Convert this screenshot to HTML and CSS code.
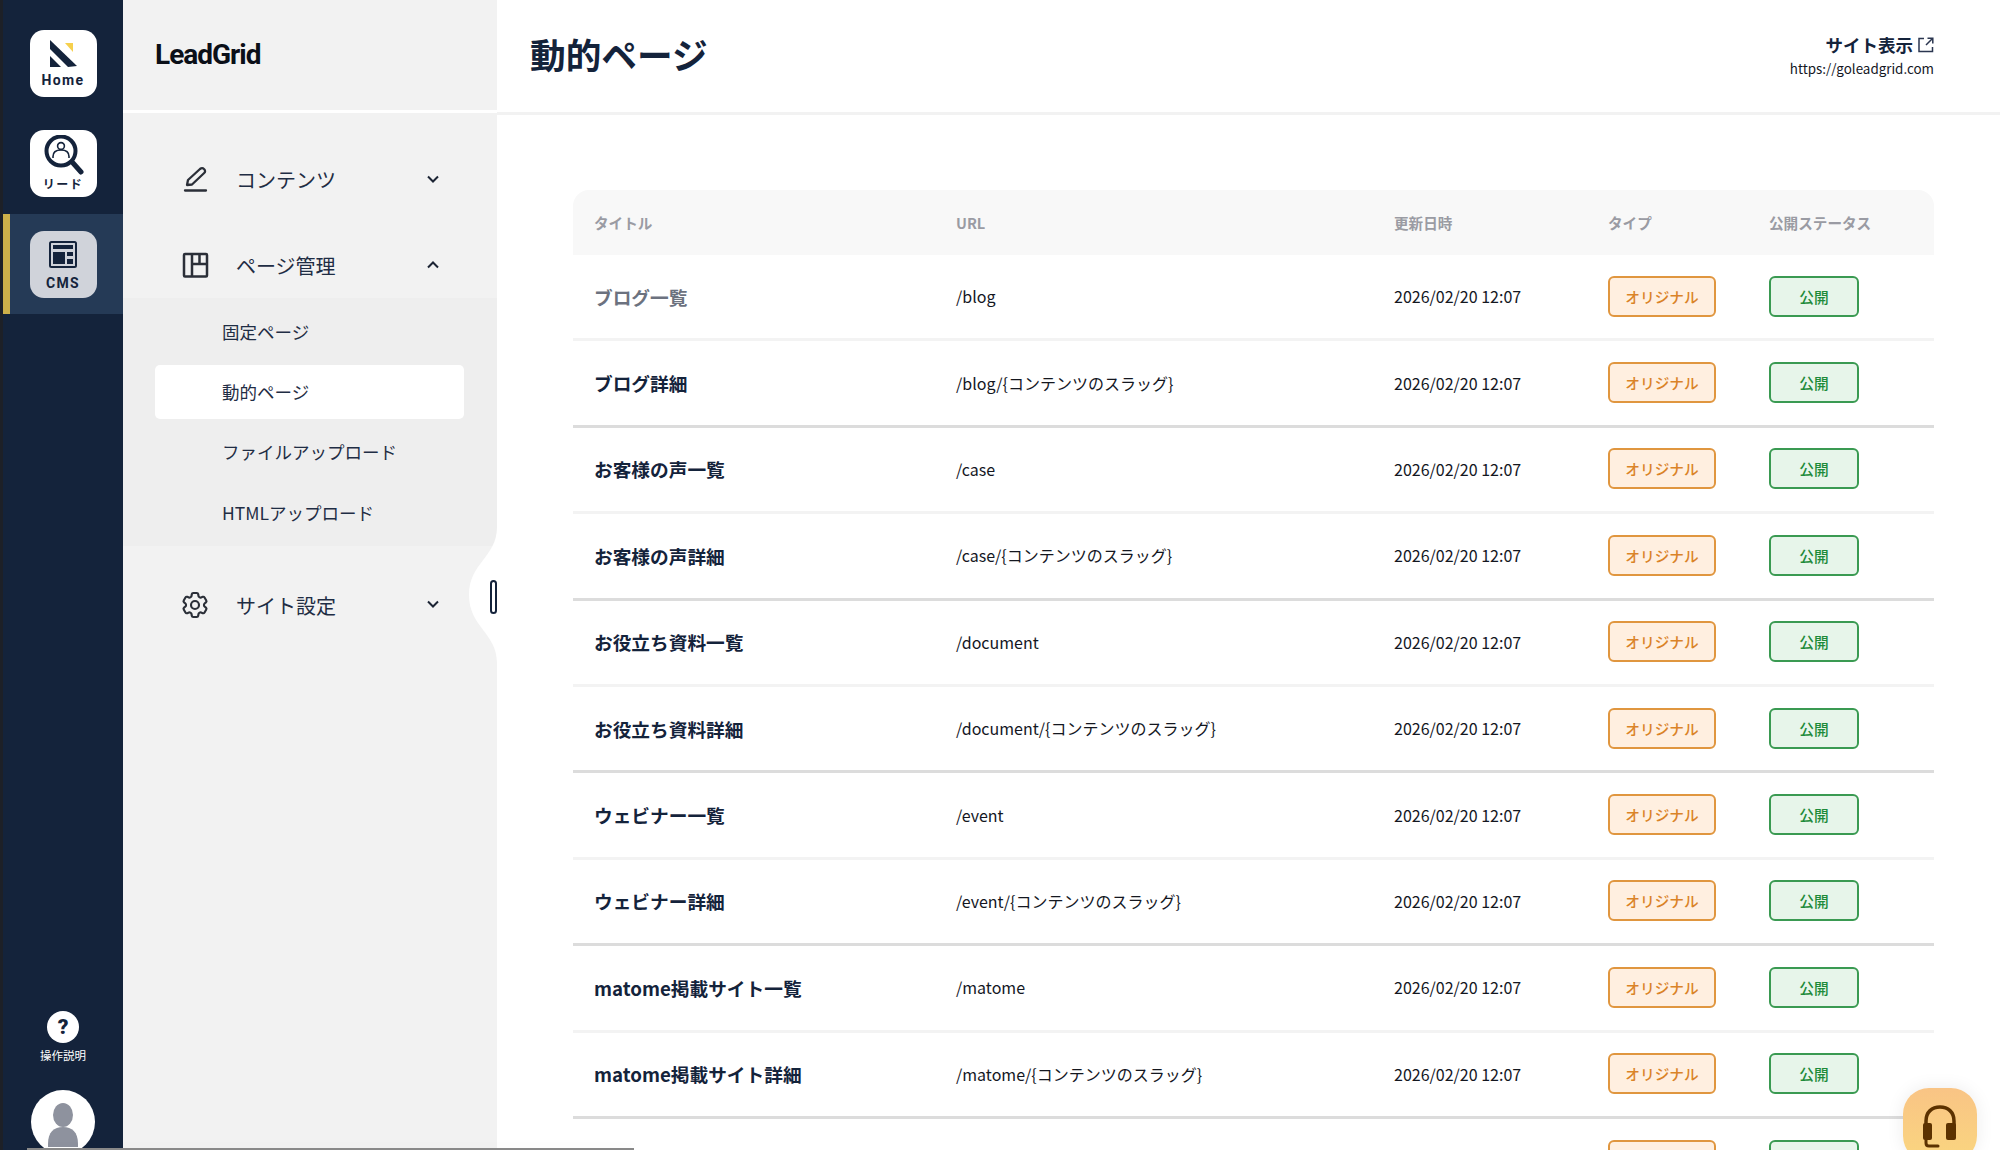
FILE: index.html
```html
<!DOCTYPE html>
<html lang="ja">
<head>
    <meta charset="UTF-8">
    <title>動的ページ</title>
    <link rel="stylesheet" href="styles.css">
</head>
<body>

<aside class="rail">
    <a class="rail-item">
        <span class="rail-tile">
            <svg class="rail-icon" width="30" height="30" viewBox="0 0 30 30">
                <path d="M2 2 L29 28 L20 29 L2 11 Z" fill="#14233b"/>
                <path d="M2 18 L13 29 L2 29 Z" fill="#14233b"/>
                <path d="M17 5 L25 5 L25 14 Z" fill="#f6d04d"/>
            </svg>
            <span class="rail-label">Home</span>
        </span>
    </a>
    <a class="rail-item rail-item-lead">
        <span class="rail-tile">
            <svg class="rail-icon" width="42" height="40" viewBox="0 0 42 40">
                <circle cx="18" cy="16" r="14.500" fill="none" stroke="#14233b" stroke-width="4"/>
                <circle cx="18" cy="11" r="3.400" fill="none" stroke="#14233b" stroke-width="1.600"/>
                <path d="M10 23 v-1.500 c0-4 3-6.500 8-6.500 s8 2.500 8 6.500 v1.500" fill="none" stroke="#14233b" stroke-width="1.600"/>
                <path d="M30 28 L38 37" stroke="#14233b" stroke-width="5" stroke-linecap="round"/>
            </svg>
            <span class="rail-label rail-label-jp">リード</span>
        </span>
    </a>
    <a class="rail-item rail-item-active">
        <span class="rail-tile">
            <svg class="rail-icon" width="30" height="30" viewBox="0 0 30 30">
                <rect x="2" y="3" width="26" height="25" rx="1.500" fill="none" stroke="#14233b" stroke-width="2"/>
                <rect x="5" y="6" width="20" height="4" fill="#14233b"/>
                <rect x="5" y="13" width="12" height="12" fill="#14233b"/>
                <rect x="19" y="13" width="6" height="4" fill="#14233b"/>
                <rect x="19" y="20" width="6" height="5" fill="#14233b"/>
            </svg>
            <span class="rail-label">CMS</span>
        </span>
    </a>
    <a class="rail-help">
        <span class="help-circle">?</span>
        <span class="help-label">操作説明</span>
    </a>
    <span class="rail-avatar">
        <svg width="64" height="64" viewBox="0 0 64 64">
            <ellipse cx="32" cy="25" rx="10" ry="12" fill="#8e929e"/>
            <path d="M17 54 c0-12 6-17 15-17 s15 5 15 17 v3 h-30 Z" fill="#8e929e"/>
        </svg>
    </span>
</aside>

<nav class="panel">
    <div class="panel-logo"><span class="logo-text">LeadGrid</span></div>
    <div class="panel-menu">
        <div class="menu-row">
            <svg class="menu-icon" width="28" height="28" viewBox="0 0 28 28" fill="none" stroke="#2b2f38" stroke-width="2.300">
                <path d="M6 20 L7 15 L19 4 C20.500 2.800 22 3 23.200 4.200 C24.400 5.400 24.300 7 23.200 8 L11 19.500 Z" stroke-linejoin="round"/>
                <path d="M4 25.500 H25" stroke-linecap="round"/>
            </svg>
            <span>コンテンツ</span>
            <svg class="chevron chevron-first" width="16" height="16" viewBox="0 0 16 16"><path d="M3 5.500 L8 10.500 L13 5.500" fill="none" stroke="#1c2434" stroke-width="2"/></svg>
        </div>
        <div class="menu-row menu-row-open">
            <svg class="menu-icon" width="28" height="28" viewBox="0 0 28 28" fill="none" stroke="#2b2f38" stroke-width="2.500">
                <rect x="3" y="3" width="23" height="22.500" rx="1"/>
                <path d="M11 3 V25.500 M11 13 H26 M18.500 3 V13"/>
            </svg>
            <span>ページ管理</span>
            <svg class="chevron chevron-up" width="16" height="16" viewBox="0 0 16 16"><path d="M3 10.500 L8 5.500 L13 10.500" fill="none" stroke="#1c2434" stroke-width="2"/></svg>
        </div>
        <div class="submenu">
            <a class="submenu-item">固定ページ</a>
            <a class="submenu-item submenu-item-active">動的ページ</a>
            <a class="submenu-item">ファイルアップロード</a>
            <a class="submenu-item">HTMLアップロード</a>
        </div>
        <div class="menu-row menu-row-last">
            <svg class="menu-icon menu-icon-gear" width="32" height="32" viewBox="0 0 24 24" fill="none" stroke="#2b2f38" stroke-width="1.600">
                <path d="M9.594 3.940c.09-.542.56-.94 1.110-.94h2.593c.55 0 1.020.398 1.110.94l.213 1.281c.063.374.313.686.645.87.074.04.147.083.22.127.324.196.72.257 1.075.124l1.217-.456a1.125 1.125 0 011.370.49l1.296 2.247a1.125 1.125 0 01-.26 1.431l-1.003.827c-.293.24-.438.613-.431.992a6.759 6.759 0 010 .255c-.007.378.138.75.43.99l1.005.828c.424.35.534.954.26 1.430l-1.298 2.247a1.125 1.125 0 01-1.369.491l-1.217-.456c-.355-.133-.75-.072-1.076.124a6.570 6.570 0 01-.22.128c-.331.183-.581.495-.644.869l-.213 1.280c-.09.543-.56.941-1.110.941h-2.594c-.55 0-1.020-.398-1.110-.94l-.213-1.281c-.062-.374-.312-.686-.644-.87a6.520 6.520 0 01-.22-.127c-.325-.196-.72-.257-1.076-.124l-1.217.456a1.125 1.125 0 01-1.369-.49l-1.297-2.247a1.125 1.125 0 01.26-1.431l1.004-.827c.292-.24.437-.613.43-.992a6.932 6.932 0 010-.255c.007-.378-.138-.75-.43-.99l-1.004-.828a1.125 1.125 0 01-.26-1.430l1.297-2.247a1.125 1.125 0 011.370-.491l1.216.456c.356.133.751.072 1.076-.124.072-.044.146-.087.22-.128.332-.183.582-.495.644-.869l.214-1.281z"/>
                <circle cx="12" cy="12" r="3"/>
            </svg>
            <span>サイト設定</span>
            <svg class="chevron" width="16" height="16" viewBox="0 0 16 16"><path d="M3 5.500 L8 10.500 L13 5.500" fill="none" stroke="#1c2434" stroke-width="2"/></svg>
        </div>
    </div>
    <svg class="panel-notch" width="28" height="136" viewBox="0 0 28 136"><path d="M28 0 C28 30 0 36 0 68 C0 100 28 106 28 136 Z" fill="#fff"/></svg>
    <span class="panel-toggle"></span>
</nav>

<main class="main">
    <header class="main-header">
        <h1 class="page-title">動的ページ</h1>
        <div class="site-link">
            <div class="site-link-name">サイト表示
                <svg width="16" height="16" viewBox="0 0 16 16" fill="none" stroke="#2b3650" stroke-width="1.500">
                    <path d="M6 1.500 H1 V14.500 H14.500 V10"/>
                    <path d="M8 8 L14.500 1.500 M9.500 1.200 H14.800 V6.500"/>
                </svg>
            </div>
            <div class="site-link-url">https://goleadgrid.com</div>
        </div>
    </header>

    <section class="table">
        <div class="table-row table-head">
            <div>タイトル</div><div>URL</div><div>更新日時</div><div>タイプ</div><div>公開ステータス</div>
        </div>
        <div class="table-row row-hover">
            <div class="cell-title">ブログ一覧</div><div>/blog</div><div>2026/02/20 12:07</div>
            <div><span class="badge badge-type">オリジナル</span></div><div><span class="badge badge-status">公開</span></div>
        </div>
        <div class="table-row row-end">
            <div class="cell-title">ブログ詳細</div><div>/blog/{コンテンツのスラッグ}</div><div>2026/02/20 12:07</div>
            <div><span class="badge badge-type">オリジナル</span></div><div><span class="badge badge-status">公開</span></div>
        </div>
        <div class="table-row">
            <div class="cell-title">お客様の声一覧</div><div>/case</div><div>2026/02/20 12:07</div>
            <div><span class="badge badge-type">オリジナル</span></div><div><span class="badge badge-status">公開</span></div>
        </div>
        <div class="table-row row-end">
            <div class="cell-title">お客様の声詳細</div><div>/case/{コンテンツのスラッグ}</div><div>2026/02/20 12:07</div>
            <div><span class="badge badge-type">オリジナル</span></div><div><span class="badge badge-status">公開</span></div>
        </div>
        <div class="table-row">
            <div class="cell-title">お役立ち資料一覧</div><div>/document</div><div>2026/02/20 12:07</div>
            <div><span class="badge badge-type">オリジナル</span></div><div><span class="badge badge-status">公開</span></div>
        </div>
        <div class="table-row row-end">
            <div class="cell-title">お役立ち資料詳細</div><div>/document/{コンテンツのスラッグ}</div><div>2026/02/20 12:07</div>
            <div><span class="badge badge-type">オリジナル</span></div><div><span class="badge badge-status">公開</span></div>
        </div>
        <div class="table-row">
            <div class="cell-title">ウェビナー一覧</div><div>/event</div><div>2026/02/20 12:07</div>
            <div><span class="badge badge-type">オリジナル</span></div><div><span class="badge badge-status">公開</span></div>
        </div>
        <div class="table-row row-end">
            <div class="cell-title">ウェビナー詳細</div><div>/event/{コンテンツのスラッグ}</div><div>2026/02/20 12:07</div>
            <div><span class="badge badge-type">オリジナル</span></div><div><span class="badge badge-status">公開</span></div>
        </div>
        <div class="table-row">
            <div class="cell-title">matome掲載サイト一覧</div><div>/matome</div><div>2026/02/20 12:07</div>
            <div><span class="badge badge-type">オリジナル</span></div><div><span class="badge badge-status">公開</span></div>
        </div>
        <div class="table-row row-end">
            <div class="cell-title">matome掲載サイト詳細</div><div>/matome/{コンテンツのスラッグ}</div><div>2026/02/20 12:07</div>
            <div><span class="badge badge-type">オリジナル</span></div><div><span class="badge badge-status">公開</span></div>
        </div>
        <div class="table-row">
            <div></div><div></div><div></div>
            <div><span class="badge badge-type"></span></div><div><span class="badge badge-status"></span></div>
        </div>
    </section>
</main>

<button class="support-btn">
    <svg width="36" height="44" viewBox="0 0 36 44" fill="none">
        <path d="M4 24 V17 C4 8 10 3 18 3 C26 3 32 8 32 17 V24" stroke="#5c3200" stroke-width="3.500"/>
        <rect x="1" y="19" width="9" height="17" rx="2" fill="#5c3200"/>
        <rect x="24" y="19" width="10" height="17" rx="2" fill="#5c3200"/>
        <path d="M4 36 V39 C4 41 5 42 7 42 H16" stroke="#5c3200" stroke-width="3" stroke-linecap="round"/>
    </svg>
</button>
<div class="bottom-line"></div>

</body>
</html>
```

FILE: styles.css
```css
* {
    box-sizing: border-box;
}
html, body {
    height: 100%;
}
body {
    margin: 0;
    display: flex;
    height: 1150px;
    overflow: hidden;
    font-family: "Noto Sans CJK JP", "Noto Sans", sans-serif;
    color: #14233b;
    background: #fff;
}

/* left dark rail */
.rail {
    width: 123px;
    flex-shrink: 0;
    display: flex;
    flex-direction: column;
    align-items: stretch;
    background: #14233b;
    border-left: 3px solid #1d2027;
    padding-top: 14px;
}
.rail-item {
    display: flex;
    justify-content: center;
    height: 100px;
    padding-top: 16px;
}
.rail-item-active {
    background: #253a56;
    border-left: 7px solid #cdb04a;
    padding-top: 17px;
}
.rail-tile {
    width: 67px;
    height: 67px;
    flex-shrink: 0;
    border-radius: 14px;
    background: #fff;
    display: flex;
    flex-direction: column;
    align-items: center;
}
.rail-item-active .rail-tile {
    background: #d0d3da;
    margin-right: 7px;
}
.rail-icon {
    flex-shrink: 0;
    margin-top: 8px;
}
.rail-item-lead .rail-icon {
    margin-top: 5px;
    margin-left: 2px;
}
.rail-label {
    font-family: Roboto, sans-serif;
    font-size: 14px;
    line-height: 16px;
    font-weight: 700;
    letter-spacing: 1.400px;
    margin-top: 4px;
}
.rail-item-active .rail-label {
    margin-top: 6px;
}
.rail-label-jp {
    font-family: "Noto Sans CJK JP", sans-serif;
    font-size: 12px;
    letter-spacing: 1.500px;
    margin-top: 1px;
}
.rail-help {
    margin-top: auto;
    display: flex;
    flex-direction: column;
    align-items: center;
    color: #fff;
}
.help-circle {
    width: 32px;
    height: 32px;
    border-radius: 50%;
    background: #fff;
    color: #14233b;
    font-family: Roboto, sans-serif;
    font-weight: 900;
    font-size: 21px;
    line-height: 32px;
    text-align: center;
}
.help-label {
    font-size: 11.500px;
    line-height: 16px;
    margin-top: 4px;
}
.rail-avatar {
    align-self: center;
    width: 64px;
    height: 64px;
    border-radius: 50%;
    background: #fff;
    margin: 27px 0 -4px 0;
    overflow: hidden;
}

/* second column */
.panel {
    position: relative;
    width: 374px;
    flex-shrink: 0;
    background: #f2f2f2;
}
.panel-logo {
    height: 113px;
    border-bottom: 3px solid #fff;
    padding: 36px 0 0 32px;
}
.logo-text {
    display: inline-block;
    font-family: Roboto, sans-serif;
    font-size: 28px;
    line-height: 38px;
    font-weight: 700;
    color: #0b0f18;
    letter-spacing: -1px;
}
.panel-menu {
    padding-top: 34px;
}
.menu-row {
    display: flex;
    align-items: center;
    height: 66px;
    padding: 0 56px 2px 58px;
    margin-bottom: 19px;
    font-size: 20px;
    color: #1f2d44;
}
.menu-row-open {
    margin-bottom: 0;
    padding-bottom: 0;
}
.menu-row-last {
    margin-top: 26px;
    padding-bottom: 0;
}
.menu-icon {
    flex-shrink: 0;
    margin-right: 27px;
}
.menu-icon-gear {
    margin: 0 25px 0 -2px;
}
.chevron {
    margin-left: auto;
    margin-top: -2px;
}
.chevron-first {
    margin-top: -1px;
}
.chevron-up {
    margin-top: 0;
}
.submenu {
    background: #eeeeee;
    padding: 7px 33px 6px 32px;
    display: flex;
    flex-direction: column;
    gap: 6.400px;
}
.submenu-item {
    display: flex;
    align-items: center;
    height: 54px;
    padding: 0 0 2px 67px;
    font-size: 17.500px;
    color: #1f2d44;
    border-radius: 5px;
}
.submenu-item-active {
    background: #fff;
}
.panel-notch {
    position: absolute;
    top: 527px;
    right: 0;
}
.panel-toggle {
    position: absolute;
    top: 580px;
    right: 0;
    width: 7px;
    height: 34px;
    border: 2px solid #14233b;
    border-radius: 4px;
    background: #fff;
}

/* main area */
.main {
    flex: 1;
    min-width: 0;
}
.main-header {
    display: flex;
    justify-content: space-between;
    align-items: center;
    height: 115px;
    border-bottom: 3px solid #f2f2f2;
    padding: 0 66px 0 33px;
}
.page-title {
    margin: -5px 0 0;
    font-size: 35.700px;
    font-weight: 700;
    color: #14233b;
}
.site-link {
    text-align: right;
    margin-top: -3px;
}
.site-link-name {
    display: flex;
    align-items: center;
    justify-content: flex-end;
    gap: 5px;
    font-size: 17.500px;
    line-height: 26px;
    font-weight: 700;
}
.site-link-url {
    font-size: 13.400px;
    line-height: 20px;
    color: #14171f;
}
.table {
    margin: 75px 66px 0 76px;
}
.table-row {
    display: grid;
    grid-template-columns: 362px 438px 214px 161px 1fr;
    align-items: center;
    height: 86.400px;
    border-bottom: 3px solid #f3f3f3;
    padding-bottom: 1px;
    font-size: 16px;
    color: #14171f;
}
.table-row > div {
    padding-left: 21px;
}
.row-end {
    border-bottom-color: #dcdcdc;
}
.table-head {
    height: 65px;
    border-bottom: 0;
    padding-bottom: 1px;
    background: #f8f8f8;
    border-radius: 16px 16px 0 0;
    font-size: 14.600px;
    font-weight: 700;
    color: #9a9ba3;
}
.cell-title {
    font-size: 18.700px;
    font-weight: 700;
    color: #14233b;
}
.row-hover .cell-title {
    color: #6c727f;
}
.badge {
    display: inline-flex;
    align-items: center;
    justify-content: center;
    height: 41px;
    vertical-align: top;
    border-radius: 6px;
    font-size: 14.700px;
    font-weight: 500;
    border: 2px solid;
}
.badge-type {
    width: 108px;
    background: #ffefe0;
    border-color: #e0963f;
    color: #da8328;
}
.badge-status {
    width: 90px;
    background: #e7f5ea;
    border-color: #3a9a52;
    color: #1e8b3a;
}

/* floating things */
.support-btn {
    position: fixed;
    left: 1903px;
    top: 1088px;
    width: 74px;
    height: 74px;
    border: 0;
    border-radius: 26px;
    padding: 0;
    background: linear-gradient(#f9c485, #fad67f);
    box-shadow: 0 0 18px rgba(0,0,0,0.08);
}
.support-btn svg {
    display: block;
    margin: 2px 0 0 19px;
}
.bottom-line {
    position: fixed;
    left: 27px;
    top: 1148px;
    width: 607px;
    height: 2px;
    background: #888;
    box-shadow: 0 -3px 8px rgba(0,0,0,0.06);
}
```
